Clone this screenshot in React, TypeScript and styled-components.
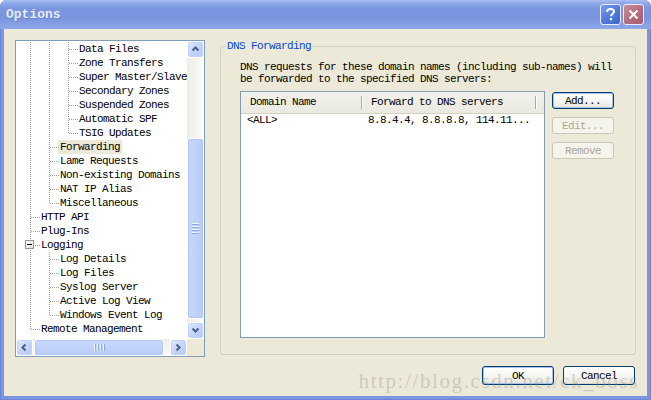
import React from 'react'
import styled, { createGlobalStyle, css } from 'styled-components'

const mono = `"Liberation Mono", "DejaVu Sans Mono", monospace`

const GlobalStyle = createGlobalStyle`
  html, body {
    margin: 0;
    padding: 0;
    background: #fff;
  }
  body {
    font-family: ${mono};
    font-size: 11px;
    letter-spacing: -0.6px;
  }
`

const Window = styled.div`
  width: 651px;
  height: 400px;
  box-sizing: border-box;
  display: flex;
  flex-direction: column;
  background: #7b96e0;
  border-radius: 7px 7px 0 0;
  overflow: hidden;
  box-shadow: inset 1px 0 0 #6c84d6, inset -1px 0 0 #6c84d6, inset 0 -1px 0 #6c84d6;
`

const TitleBar = styled.div`
  height: 29px;
  flex: none;
  display: flex;
  align-items: center;
  padding: 0 7px 0 6px;
  background: linear-gradient(
    to bottom,
    #a9bff2 0px,
    #8fa9ea 3px,
    #7c97e0 8px,
    #7a95df 18px,
    #86a2e6 25px,
    #8ca8e9 29px
  );
  border-radius: 7px 7px 0 0;
`

const Title = styled.div`
  flex: 1;
  color: #e4ecfb;
  font-family: ${mono};
  font-size: 13px;
  font-weight: bold;
  letter-spacing: 0;
  text-shadow: 1px 1px 0 #6a83d2;
`

const CaptionButtons = styled.div`
  display: flex;
  gap: 2px;
`

const CaptionButton = styled.div<{ $tone: 'help' | 'close' }>`
  width: 19px;
  height: 19px;
  border: 1px solid #e8eefc;
  border-radius: 3px;
  display: flex;
  align-items: center;
  justify-content: center;
  ${({ $tone }) =>
    $tone === 'help'
      ? css`
          background: linear-gradient(135deg, #7a9cf0 0%, #4f78dc 55%, #3f66cf 100%);
        `
      : css`
          background: linear-gradient(135deg, #c98d9a 0%, #b16d7e 55%, #a35f71 100%);
        `}
`

const Client = styled.div`
  flex: 1;
  margin: 0 4px 4px 4px;
  background: #ece9d8;
  position: relative;
  padding: 11px 10px 0 11px;
  display: flex;
  flex-direction: column;
`

const MainRow = styled.div`
  display: flex;
  gap: 15px;
  height: 317px;
`

/* ---------- tree ---------- */

const TreeBox = styled.div`
  width: 190px;
  box-sizing: border-box;
  border: 1px solid #7f9db9;
  background: #fff;
  display: grid;
  grid-template-columns: 1fr 17px;
  grid-template-rows: 1fr 17px;
`

const TreeContent = styled.div`
  overflow: hidden;
  padding-top: 1px;
  white-space: nowrap;
`

const TreeRow = styled.div`
  display: flex;
  height: 14px;
  padding-left: 5px;
`

const dotV = css`
  background-image: linear-gradient(to bottom, #a0a0a0 50%, transparent 50%);
  background-size: 1px 2px;
`

const dotH = css`
  background-image: linear-gradient(to right, #a0a0a0 50%, transparent 50%);
  background-size: 2px 1px;
`

const Guide = styled.span<{ $line: boolean }>`
  flex: none;
  width: 19px;
  height: 14px;
  position: relative;
  &::before {
    content: '';
    display: ${({ $line }) => ($line ? 'block' : 'none')};
    position: absolute;
    left: 9px;
    top: 0;
    width: 1px;
    height: 14px;
    ${dotV}
  }
`

const Connector = styled.span<{ $last: boolean }>`
  flex: none;
  width: 19px;
  height: 14px;
  position: relative;
  &::before {
    content: '';
    position: absolute;
    left: 9px;
    top: 0;
    width: 1px;
    height: ${({ $last }) => ($last ? '7px' : '14px')};
    ${dotV}
  }
  &::after {
    content: '';
    position: absolute;
    left: 10px;
    top: 7px;
    width: 9px;
    height: 1px;
    ${dotH}
  }
`

const Expander = styled.span`
  position: absolute;
  z-index: 1;
  left: 4px;
  top: 2px;
  width: 7px;
  height: 7px;
  border: 1px solid #8c9aa8;
  background: linear-gradient(135deg, #ffffff, #e2ded0);
  display: flex;
  align-items: center;
  justify-content: center;
  &::before {
    content: '';
    width: 5px;
    height: 1px;
    background: #000;
  }
`

const TreeLabel = styled.span<{ $selected?: boolean }>`
  margin-left: -1px;
  padding: 0 2px;
  line-height: 14px;
  height: 14px;
  color: #000;
  background: ${({ $selected }) => ($selected ? '#ece9d8' : 'transparent')};
`

/* ---------- scrollbars ---------- */

const ScrollV = styled.div`
  display: flex;
  flex-direction: column;
`

const ScrollH = styled.div`
  display: flex;
`

const ArrowButton = styled.div`
  flex: none;
  width: 17px;
  height: 17px;
  box-sizing: border-box;
  border: 1px solid #fff;
  border-radius: 3px;
  background: linear-gradient(135deg, #e3ebfe 0%, #c5d5fb 50%, #b4c8f6 100%);
  box-shadow: inset 0 0 0 1px #c2d3fa;
  display: flex;
  align-items: center;
  justify-content: center;
`

const TrackV = styled.div`
  flex: 1;
  background: linear-gradient(to right, #eeede5, #fcfcfa);
  padding-top: 80px;
`

const TrackH = styled.div`
  flex: 1;
  background: linear-gradient(to bottom, #eeede5, #fcfcfa);
  padding-left: 1px;
  display: flex;
`

const Thumb = styled.div<{ $horizontal?: boolean }>`
  box-sizing: border-box;
  border: 1px solid #fff;
  border-radius: 3px;
  background: ${({ $horizontal }) =>
    $horizontal
      ? 'linear-gradient(to bottom, #c9d8fc, #b8ccf8)'
      : 'linear-gradient(to right, #c9d8fc, #b8ccf8)'};
  box-shadow: inset 0 0 0 1px #b2c6f6;
  display: flex;
  align-items: center;
  justify-content: center;
`

const Grip = styled.div<{ $horizontal?: boolean }>`
  display: flex;
  flex-direction: ${({ $horizontal }) => ($horizontal ? 'row' : 'column')};
  gap: 1px;
  & > span {
    display: block;
    background: #eef3fe;
    border-${({ $horizontal }) => ($horizontal ? 'right' : 'bottom')}: 1px solid #8ca9ee;
    ${({ $horizontal }) => ($horizontal ? 'width: 1px; height: 7px;' : 'width: 7px; height: 1px;')}
  }
`

const Corner = styled.div`
  background: #ece9d8;
`

const Chevron = ({ dir }: { dir: 'up' | 'down' | 'left' | 'right' }) => {
  const d = {
    up: 'M1.5 5.5 L4.5 2.5 L7.5 5.5',
    down: 'M1.5 2.5 L4.5 5.5 L7.5 2.5',
    left: 'M5.5 1.5 L2.5 4.5 L5.5 7.5',
    right: 'M2.5 1.5 L5.5 4.5 L2.5 7.5',
  }[dir]
  return (
    <svg width="9" height="9" viewBox="0 0 9 9">
      <path d={d} fill="none" stroke="#4d6185" strokeWidth="2" />
    </svg>
  )
}

/* ---------- right group ---------- */

const Group = styled.fieldset`
  margin: 0;
  width: 416px;
  height: 315px;
  box-sizing: border-box;
  border: 1px solid #d0d0bf;
  border-radius: 3px;
  padding: 0 10px 0 19px;
  min-width: 0;
`

const GroupLegend = styled.legend`
  margin-left: -14px;
  padding: 0 1px;
  color: #0046d5;
  line-height: 12px;
`

const Description = styled.p`
  margin: 9px 0 0 0;
  line-height: 12px;
  color: #000;
`

const ListRow = styled.div`
  display: flex;
  gap: 7px;
  margin-top: 6px;
`

const ListView = styled.div`
  width: 305px;
  height: 247px;
  box-sizing: border-box;
  border: 1px solid #7f9db9;
  background: #fff;
`

const ListHeader = styled.div`
  display: flex;
  height: 21px;
  background: linear-gradient(to bottom, #f2f1ea, #ebeae1);
  border-bottom: 1px solid #d6d2c2;
`

const HeaderCell = styled.div<{ $width: number }>`
  width: ${({ $width }) => $width}px;
  box-sizing: border-box;
  padding-left: 9px;
  line-height: 21px;
  position: relative;
  &::after {
    content: '';
    position: absolute;
    right: 0;
    top: 4px;
    width: 1px;
    height: 13px;
    background: #aca899;
    box-shadow: 1px 0 0 #fff;
  }
`

const ListItem = styled.div`
  display: flex;
  height: 13px;
  line-height: 13px;
`

const ListCell = styled.div<{ $width: number; $pad: number }>`
  width: ${({ $width }) => $width}px;
  padding-left: ${({ $pad }) => $pad}px;
  box-sizing: border-box;
  white-space: nowrap;
  overflow: hidden;
`

const SideButtons = styled.div`
  display: flex;
  flex-direction: column;
  gap: 8px;
  padding-top: 1px;
`

const PushButton = styled.button<{ $focus?: boolean; $w: number; $h: number }>`
  width: ${({ $w }) => $w}px;
  height: ${({ $h }) => $h}px;
  padding: 0;
  font-family: ${mono};
  font-size: 11px;
  letter-spacing: -0.6px;
  color: #000;
  border: 1px solid #003c74;
  border-radius: 3px;
  background: linear-gradient(to bottom, #ffffff 0%, #f5f5f1 55%, #e6e5dc 100%);
  box-shadow: ${({ $focus }) => ($focus ? 'inset 0 0 0 1px #a9c2ec' : 'inset 0 -1px 0 #d8d5c8')};
  &:disabled {
    color: #aca899;
    border-color: #cac8bb;
    background: #f5f4ea;
    box-shadow: none;
  }
`

const Footer = styled.div`
  display: flex;
  justify-content: flex-end;
  gap: 9px;
  margin-top: 9px;
  margin-right: 2px;
`

const Watermark = styled.div`
  position: absolute;
  right: 8px;
  bottom: 2px;
  font-family: "Liberation Serif", serif;
  font-size: 21px;
  letter-spacing: 1.6px;
  color: rgba(150, 150, 140, 0.38);
  pointer-events: none;
  white-space: nowrap;
`

type TreeNode = {
  label: string
  guides: boolean[]
  last?: boolean
  expander?: boolean
  selected?: boolean
}

const l3 = (label: string, last = false): TreeNode => ({ label, guides: [true, true], last })
const l2 = (label: string, last = false, selected = false): TreeNode => ({
  label,
  guides: [true],
  last,
  selected,
})
const l1 = (label: string, last = false, expander = false): TreeNode => ({
  label,
  guides: [],
  last,
  expander,
})

const treeNodes: TreeNode[] = [
  l3('Data Files'),
  l3('Zone Transfers'),
  l3('Super Master/Slave'),
  l3('Secondary Zones'),
  l3('Suspended Zones'),
  l3('Automatic SPF'),
  l3('TSIG Updates', true),
  l2('Forwarding', false, true),
  l2('Lame Requests'),
  l2('Non-existing Domains'),
  l2('NAT IP Alias'),
  l2('Miscellaneous', true),
  l1('HTTP API'),
  l1('Plug-Ins'),
  l1('Logging', false, true),
  l2('Log Details'),
  l2('Log Files'),
  l2('Syslog Server'),
  l2('Active Log View'),
  l2('Windows Event Log', true),
  l1('Remote Management', true),
]

const App: React.FC = () => {
  return (
    <>
      <GlobalStyle />
      <Window>
        <TitleBar>
          <Title>Options</Title>
          <CaptionButtons>
            <CaptionButton $tone="help">
              <svg width="11" height="13" viewBox="0 0 11 13">
                <path
                  d="M2 4 C2 1.8 3.6 1 5.5 1 C7.5 1 9 2 9 3.8 C9 5.6 6 6 6 8.2"
                  fill="none"
                  stroke="#fff"
                  strokeWidth="2"
                />
                <rect x="4.9" y="10" width="2.2" height="2.2" fill="#fff" />
              </svg>
            </CaptionButton>
            <CaptionButton $tone="close">
              <svg width="11" height="11" viewBox="0 0 11 11">
                <path d="M1.5 1.5 L9.5 9.5 M9.5 1.5 L1.5 9.5" stroke="#fff" strokeWidth="2" />
              </svg>
            </CaptionButton>
          </CaptionButtons>
        </TitleBar>

        <Client>
          <MainRow>
            <TreeBox>
              <TreeContent>
                {treeNodes.map((node, i) => (
                  <TreeRow key={i}>
                    {node.guides.map((g, j) => (
                      <Guide key={j} $line={g} />
                    ))}
                    <Connector $last={!!node.last}>{node.expander && <Expander />}</Connector>
                    <TreeLabel $selected={node.selected}>{node.label}</TreeLabel>
                  </TreeRow>
                ))}
              </TreeContent>
              <ScrollV>
                <ArrowButton>
                  <Chevron dir="up" />
                </ArrowButton>
                <TrackV>
                  <Thumb style={{ height: 181 }}>
                    <Grip>
                      <span />
                      <span />
                      <span />
                      <span />
                    </Grip>
                  </Thumb>
                </TrackV>
                <ArrowButton>
                  <Chevron dir="down" />
                </ArrowButton>
              </ScrollV>
              <ScrollH>
                <ArrowButton>
                  <Chevron dir="left" />
                </ArrowButton>
                <TrackH>
                  <Thumb $horizontal style={{ width: 130 }}>
                    <Grip $horizontal>
                      <span />
                      <span />
                      <span />
                      <span />
                    </Grip>
                  </Thumb>
                </TrackH>
                <ArrowButton>
                  <Chevron dir="right" />
                </ArrowButton>
              </ScrollH>
              <Corner />
            </TreeBox>

            <Group>
              <GroupLegend>DNS Forwarding</GroupLegend>
              <Description>
                DNS requests for these domain names (including sub-names) will
                <br />
                be forwarded to the specified DNS servers:
              </Description>
              <ListRow>
                <ListView>
                  <ListHeader>
                    <HeaderCell $width={121}>Domain Name</HeaderCell>
                    <HeaderCell $width={174}>Forward to DNS servers</HeaderCell>
                  </ListHeader>
                  <ListItem>
                    <ListCell $width={121} $pad={6}>
                      &lt;ALL&gt;
                    </ListCell>
                    <ListCell $width={174} $pad={6}>
                      8.8.4.4, 8.8.8.8, 114.11...
                    </ListCell>
                  </ListItem>
                </ListView>
                <SideButtons>
                  <PushButton $focus $w={62} $h={17}>
                    Add...
                  </PushButton>
                  <PushButton disabled $w={62} $h={17}>
                    Edit...
                  </PushButton>
                  <PushButton disabled $w={62} $h={17}>
                    Remove
                  </PushButton>
                </SideButtons>
              </ListRow>
            </Group>
          </MainRow>

          <Footer>
            <PushButton $focus $w={72} $h={19}>
              OK
            </PushButton>
            <PushButton $w={72} $h={19}>
              Cancel
            </PushButton>
          </Footer>

          <Watermark>http://blog.csdn.net/ck_boss</Watermark>
        </Client>
      </Window>
    </>
  )
}

export default App
